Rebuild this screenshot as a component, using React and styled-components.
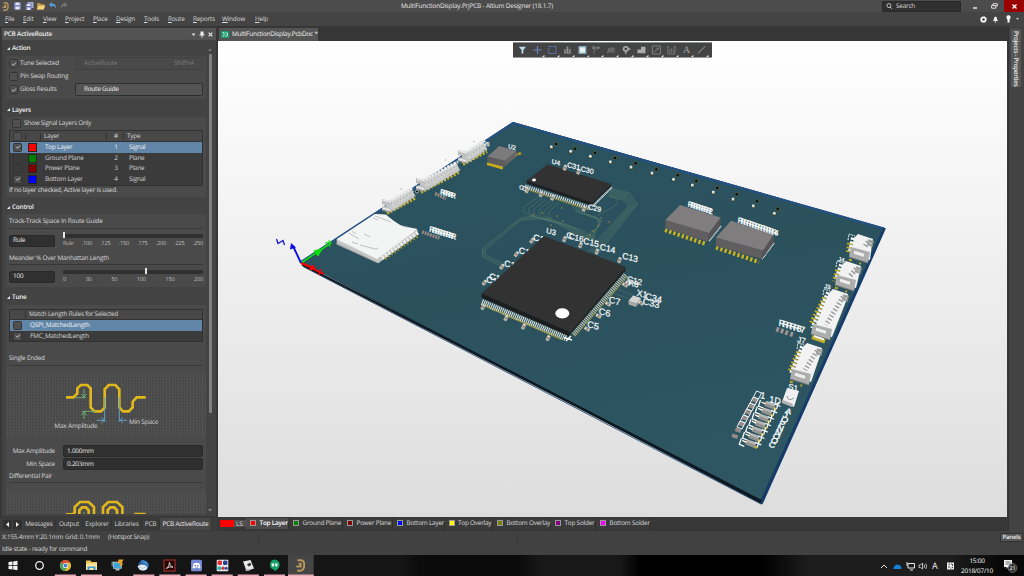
import React from "react";
import styled, { createGlobalStyle } from "styled-components";

const Global = createGlobalStyle`
  * { box-sizing: border-box; }
  html, body { margin: 0; padding: 0; background: #393939; overflow: hidden; }
  body {
    font-family: "Open Sans", "Noto Sans", sans-serif; font-size: 6.4px; line-height: 8px; letter-spacing: -0.21px; color: #dadada;
    text-rendering: geometricPrecision;
  }
`;

const Window = styled.div`
  width: 1024px; height: 576px; display: flex; flex-direction: column; overflow: hidden; white-space: nowrap;
`;
const Text = styled.span`
  display: block;
  padding-bottom: 1px;
  width: ${(p) => (p.$w ? p.$w + "px" : "auto")};
  flex: none;
  letter-spacing: ${(p) => -0.21 + (p.$ls || 0)}px;
  color: ${(p) => p.$color || "inherit"};
  font-weight: ${(p) => p.$weight || 400};
  text-align: ${(p) => p.$align || "left"};
  padding-left: ${(p) => p.$pl || 0}px;
`;

/* ---------- title and menu ---------- */
const TitleBar = styled.header`
  height: 12px; flex: none; background: #4c4c4c; display: grid; grid-template-columns: 401px 1fr 142px; align-items: center;
`;
const QuickTools = styled.div`display: flex; align-items: center; padding-left: 1px; height: 12px;`;
const TitleRight = styled.div`display: flex; align-items: center; height: 12px;`;
const SearchBox = styled.div`
  width: 79px; height: 11px; background: #303030; border: 1px solid #292929; border-radius: 1px;
  display: flex; align-items: center; gap: 4px; padding-left: 3px;
`;
const WindowButton = styled.div`
  width: ${(p) => p.$w}px; height: 12px; background: ${(p) => (p.$close ? "#9b0000" : "none")};
  display: flex; align-items: center; justify-content: center; margin-left: ${(p) => p.$ml || 0}px;
`;
const MenuBar = styled.nav`
  height: 14px; flex: none; background: #444; display: flex; align-items: center; padding-left: 5px;
`;
const MenuItem = styled.span`
  display: block; width: ${(p) => p.$w}px; flex: none; padding-bottom: 1px;
  &::first-letter { text-decoration: underline; }
`;
const MenuRight = styled.div`margin-left: auto; display: flex; align-items: center; gap: 5px; padding-right: 4px;`;

/* ---------- main area ---------- */
const Main = styled.div`height: 505px; flex: none; display: flex; background: #373737;`;
const Panel = styled.aside`width: 218px; flex: none; display: flex; flex-direction: column; padding: 2px 2px 0 2px; background: #373737;`;
const PanelHeader = styled.div`
  height: 12px; background: #535353; display: flex; align-items: center; padding: 0 3px 0 2px; color: #f0f0f0; flex: none;
`;
const HeaderIcons = styled.div`margin-left: auto; display: flex; gap: 3px; align-items: center;`;
const PanelBody = styled.div`height: 476px; flex: none; background: #434343; display: flex; overflow: hidden;`;
const Sections = styled.div`width: 204px; padding-left: 4px; flex: none; height: 474px; overflow: hidden;`;
const ScrollTrack = styled.div`
  width: 10px; height: 474px; display: flex; flex-direction: column; align-items: center; padding: 8px 2px 2px 0;
`;
const ScrollThumb = styled.div`width: 3px; height: 359px; background: #808080; border-radius: 1px; margin: 3px 0 auto;`;
const Heading = styled.h3`
  margin: 0; height: ${(p) => p.$h}px; font-size: 6.4px; font-weight: 600; color: #f2f2f2; display: flex; align-items: center; gap: 2px;
  padding-left: 1px; padding-top: ${(p) => p.$pt || 0}px;
`;
const Card = styled.section`
  height: ${(p) => p.$h}px; background: #4a4a4a; padding: ${(p) => p.$p || "0 3px"}; overflow: hidden;
`;
const Row = styled.div`display: flex; align-items: center; height: ${(p) => p.$h}px; padding-left: ${(p) => p.$pl || 0}px;`;
const CheckFrame = styled.span`
  width: 9px; height: 9px; flex: none; border-radius: 1.5px; margin-right: ${(p) => p.$mr ?? 2}px;
  background: ${(p) => (p.$faint ? "#3c3c3c" : "#505050")}; border: 1px solid ${(p) => (p.$faint ? "#353535" : "#353535")};
  display: flex; align-items: center; justify-content: center;
`;
const ActionButton = styled.div`
  width: 128px; height: 13px; border-radius: 1.5px; margin-left: auto; display: flex; align-items: center; justify-content: space-between;
  padding: 0 8px; background: ${(p) => (p.$off ? "#494949" : "#545454")}; border: 1px solid ${(p) => (p.$off ? "#404040" : "#303030")};
  color: ${(p) => (p.$off ? "#7c7c7c" : "#f2f2f2")};
`;
const Table = styled.div`width: 194px; border: 1px solid #313131; background: #3c3c3c; border-radius: 1px; overflow: hidden;`;
const TableRow = styled.div`
  height: ${(p) => p.$h || 10.7}px; display: flex; align-items: center; padding-left: 3px;
  background: ${(p) => (p.$head ? "#484848" : p.$on ? "#6085a6" : "#3b3b3b")};
  border-bottom: ${(p) => (p.$head ? "1px solid #333" : "none")};
  color: ${(p) => (p.$on ? "#f4f4f4" : "#d6d6d6")};
`;
const Swatch = styled.span`width: 9px; height: 9px; background: ${(p) => p.$c}; border: 1px solid #262626; margin: 0 8px 0 6px; flex: none;`;
const ColRule = styled.i`width: 1px; height: 7px; background: #333; flex: none; margin: 0 ${(p) => p.$mr || 0}px 0 ${(p) => p.$ml || 0}px;`;
const Rule = styled.div`height: 1px; background: #383838; margin-top: ${(p) => p.$mt || 0}px;`;
const Field = styled.div`
  width: ${(p) => p.$w}px; height: 12px; background: #303030; border: 1px solid #292929; border-radius: 2px;
  display: flex; align-items: center; padding-left: 3px; color: #eee; flex: none; margin-left: ${(p) => p.$ml || 0}px;
`;
const Slider = styled.div`width: 140px; margin-left: 8px; height: 16px; padding-top: 1px;`;
const Track = styled.div`height: 4px; background: #303030; border-radius: 1px; display: flex; align-items: center; padding-left: ${(p) => p.$at}px;`;
const Thumb = styled.i`width: 2px; height: 6px; background: #e6e6e6; margin-top: -1px; flex: none;`;
const Ticks = styled.div`display: flex; justify-content: space-between; font-size: 5.6px; line-height: 7px; margin-top: 2px; color: #bdbdbd;`;
const Figure = styled.div`
  width: 200px; height: ${(p) => p.$h}px; margin-left: -3px; overflow: hidden;
  background: #4b4b4b repeating-conic-gradient(#515151 0 25%, #484848 0 50%) 0 0 / 3px 3px;
  svg { display: block; }
`;
const PanelTabs = styled.div`height: 14px; display: flex; align-items: center; flex: none; background: #3b3b3b; margin: 1px -2px 0; overflow: hidden; padding-left: 3px;`;
const Arrow = styled.span`width: 10px; height: 9px; background: #303030; display: flex; align-items: center; justify-content: center; border-right: 1px solid #444;`;
const PanelTab = styled.span`
  width: ${(p) => p.$w}px; height: 12px; flex: none; line-height: 11px; text-align: center;
  background: ${(p) => (p.$on ? "#484848" : "#3b3b3b")}; border-right: 1px solid #333; color: ${(p) => (p.$on ? "#f0f0f0" : "#d6d6d6")};
`;

const Workspace = styled.div`width: 790px; flex: none; display: flex; flex-direction: column;`;
const DocTabs = styled.div`height: 15px; padding-top: 2px; background: #363636; flex: none;`;
const DocTab = styled.div`width: 99px; height: 13px; margin-left: 1px; background: #555; display: flex; align-items: center; padding-left: 2px; gap: 3px; color: #f2f2f2;`;
const Canvas = styled.div`
  position: relative; width: 789px; height: 476px; background: linear-gradient(#fff, #ddd); flex: none;
  > svg { display: block; }
`;
const FloatBar = styled.div`
  position: absolute; left: 295px; top: 1px; width: 199px; height: 16px; background: #444; border-top: 1px solid #8b918f; border-bottom: 1px solid #999;
  display: flex; align-items: center; padding-left: 2px;
`;
const ToolCell = styled.span`width: 14.9px; height: 14px; display: flex; align-items: center; justify-content: center; flex: none;`;
const LayerTabs = styled.div`height: 12px; display: flex; align-items: center; background: #383838; padding-left: 2px;`;
const LayerTab = styled.span`
  display: flex; align-items: center; height: 11px; width: ${(p) => p.$w}px; flex: none; padding-left: 4px; gap: 3.5px;
  border-right: 1px solid #2f2f2f; background: ${(p) => (p.$on ? "#4c4c4c" : "#3b3b3b")}; color: ${(p) => (p.$on ? "#fff" : "#dcdcdc")};
  font-weight: ${(p) => (p.$on ? 600 : 400)};
`;
const LayerColor = styled.i`width: 6px; height: 6px; border: 1px solid #999; background: ${(p) => p.$c}; flex: none;`;
const CurrentLayer = styled.span`display: flex; width: 26px; height: 7px; background: #505050; line-height: 7px; flex: none; &::before { content: ""; width: 14px; background: #f00; margin-right: 2px; }`;
const SideBar = styled.div`width: 16px; background: #434343; padding: 3px 0 0 2px; border-left: 1px solid #333;`;
const SideTab = styled.div`
  width: 10px; height: 58px; background: #565656; writing-mode: vertical-rl; line-height: 10px; padding-top: 2px; font-weight: 600; letter-spacing: -0.33px; color: #e6e6e6;
`;

/* ---------- footer ---------- */
const Status = styled.footer`height: 24px; flex: none; background: #414141; display: grid; grid-template-rows: 13px 11px;`;
const StatusRow = styled.div`display: flex; align-items: center; padding: 0 1px 0 2px;`;
const PanelsButton = styled.div`margin-left: auto; width: 23px; height: 9px; background: #555; border: 1px solid #333; line-height: 6px; text-align: center; color: #eee; font-weight: 600; font-size: 6px;`;
const Divider = styled.i`width: 1px; height: 8px; background: #353535; margin-left: ${(p) => p.$ml}px;`;
const TaskBar = styled.div`
  height: 21px; flex: none; display: flex; color: #fff;
  background: linear-gradient(90deg, #151515 0 400px, #0b0b0b 420px 520px, #181818 540px 620px, #000 640px 760px, #1d1d1d 810px 950px, #080808 1000px);
`;
const TaskButton = styled.div`
  width: 26.15px; height: 21px; display: flex; align-items: center; justify-content: center; flex: none;
  background: ${(p) => (p.$on ? "#454545" : "none")};
  box-shadow: ${(p) => (p.$run ? "inset 0 -1.5px #e9a9b5" : "none")};
  clip-path: inset(0 ${(p) => (p.$on ? 0 : 2.5)}px);
`;
const Tray = styled.div`margin-left: auto; display: flex; align-items: center; padding-right: 6px;`;
const Clock = styled.div`width: 46px; text-align: center; line-height: 9.5px; margin: 0 3px 0 -1px;`;

/* ---------- small drawings ---------- */
const Check = ({ on, faint, mr }) => (
  <CheckFrame $faint={faint} $mr={mr}>
    {on && <svg width="6" height="6" viewBox="0 0 6 6"><path d="M1 2.8 2.5 4.3 5 1.5" fill="none" stroke="#c8c8c8" strokeWidth="1" /></svg>}
  </CheckFrame>
);
const Tri = () => <svg width="3" height="3" viewBox="0 0 3 3"><path d="M3 0V3H0Z" fill="#eee" /></svg>;
const AltiumMark = ({ s = 9 }) => (
  <svg width={s} height={s} viewBox="0 0 9 9">
    <path d="M2.4.8H4.6A2.4 2.4 0 0 1 7 3.4V5A3 3 0 0 1 4.2 8.200H2.200M2.300 5.800V5.200H4.600V3.200H3.200" fill="none" stroke="#b9995a" strokeWidth="1.35" />
  </svg>
);

const toolIcons = [
  <path key="0" d="M1 1.5H9L6 5V9H4V5Z" fill="#b9dcec" />,
  <path key="1" d="M5 .5V9.5M.5 5H9.5" stroke="#6884c0" strokeWidth="1.2" fill="none" />,
  <rect key="2" x="1" y="1" width="8" height="8" fill="none" stroke="#6a8ad6" strokeDasharray="1.5 .7" />,
  <path key="3" d="M1.500 8.500V4H3V8.500ZM4 8.500V1H6V8.500ZM7 8.500V4H8.500V8.500ZM1 8H9V9H1Z" fill="#959595" />,
  <g key="4"><rect x=".5" y=".5" width="9" height="9" fill="#7fa8b8" /><rect x="2" y="2" width="6" height="6" fill="#e9eef0" /></g>,
  <g key="5" fill="none" stroke="#8a8a8a"><path d="M2 9V6L7 2.500" strokeDasharray="2 .7" /><rect x="1" y="1.500" width="2" height="2" /><path d="M4 2.500H9M7.500 4V1" /></g>,
  <path key="6" d="M.5 8.500 2 3V8L4 2V8L6 2V8L8 3V8" fill="none" stroke="#6f6f6f" />,
  <g key="7"><circle cx="4.300" cy="3.800" r="2.500" fill="none" stroke="#b4b4b4" strokeWidth="1.700" /><path d="M4.300 6V9.500M6.500 4H9.500" stroke="#b4b4b4" strokeWidth="1.300" /></g>,
  <path key="8" d="M.5 8.500V4.500H4.500V1.500H9.500V8.500Z" fill="#aaa" />,
  <path key="9" d="M.5.5H9.500V9.500H.5ZM2.500 7.500 7 3M5 3H7V5" fill="none" stroke="#858585" />,
  <path key="10" d="M1 1V9.500H9V1M3 8V4M5 8V3M7 8V4M0 1.500H2.500M7.500 1.500H10" fill="none" stroke="#7a7a7a" />,
  <text key="11" x="5" y="8.800" textAnchor="middle" fontFamily="Liberation Serif" fontSize="11" fill="#a0a0a0">A</text>,
  <path key="12" d="M1 9 9 1" stroke="#858585" strokeWidth="1.200" />,
];

const Meander = () => (
  <svg width="200" height="65" viewBox="18 69 600 195">
    <path d="M198 142H220L232 130V115L243 105H262L272 115V172L283 184H303L314 173V118L326 105H346L358 118V172L369 184H386L398 172V155L410 142H437" fill="none" stroke="#e0b81c" strokeWidth="8" />
    <g fill="none" stroke="#6faa72" strokeWidth="3"><path d="M225 143H258M252 117V140M244 132 252 141 260 132M246 184H288M252 207V187M244 196 252 186 260 196" /></g>
    <g fill="none" stroke="#5fa0c4" strokeWidth="3"><path d="M314 142V216M358 142V216M290 211H312M304 203 313 211 304 219M381 211H360M369 203 360 211 369 219" /></g>
    <g fill="#d4d4d4" fontSize="19.5" fontFamily="Open Sans" letterSpacing="0">
      <text x="163" y="234" textLength="130">Max Amplitude</text><text x="387" y="221" textLength="88">Min Space</text>
    </g>
  </svg>
);
const PairMeander = () => (
  <svg width="200" height="24" viewBox="18 422 600 72">
    <g fill="none" stroke="#e0b81c" strokeWidth="8">
      <path d="M198 492H218L224 486V470L240 455H266L282 470V500M238 500V480L246 471H258L266 480V500" />
      <path d="M309 500V470L325 455H351L367 470V500M323 500V480L331 471H343L351 480V500M403 491H437" />
    </g>
    <path d="M252 486V500" stroke="#6faa72" strokeWidth="3" />
  </svg>
);

/* ---------- board drawing ---------- */
const poly = (pts) => pts.map((p) => p.join(",")).join(" ");
const Silk = ({ x, y, s = 8, children, m = "1 .26 -.12 1.02", w = 0.22 }) => (
  <text transform={`matrix(${m} ${x} ${y})`} fontSize={s} fill="#f4f8f8" stroke="#f4f8f8" strokeWidth={w} letterSpacing="0" fontFamily="Liberation Sans">{children}</text>
);
const Block = ({ a, b, c, d, h, top, front, side }) => (
  <g>
    <polygon points={poly([a, d, [d[0] - 1, d[1] + h], [a[0], a[1] + h]])} fill={front} />
    <polygon points={poly([d, c, [c[0] - 0.5, c[1] + h], [d[0] - 1, d[1] + h]])} fill={side} />
    <polygon points={poly([a, b, c, d])} fill={top} />
  </g>
);
const Pins = ({ p, q, w = 3, dash = "1 1", c = "#d9dcd6" }) => (
  <line x1={p[0]} y1={p[1]} x2={q[0]} y2={q[1]} stroke={c} strokeWidth={w} strokeDasharray={dash} />
);
const Cap = ({ x, y, r = 0 }) => (
  <g transform={`translate(${x} ${y}) rotate(${r})`}>
    <rect x="-1.7" y="-2.8" width="3.6" height="5.8" rx="1" fill="#b9b6ab" /><rect x="-1.5" y="-1" width="3" height="2" fill="#958c82" /><rect x="-1" y="-2.4" width="1.6" height="1.3" fill="#ebe9e2" />
  </g>
);
const holes = [
  [551.3, 146.7, 556, 144], [570.7, 151.3, 575, 148.7], [590.3, 156.3, 595, 153], [610.3, 161.7, 615, 158], [631, 167, 635.7, 163.3],
  [652, 173, 656.3, 169.3], [673.5, 179.2, 677.7, 175.3], [692.3, 185, 696.3, 181], [713.3, 192, 717.3, 188], [733, 199, 736.7, 194.3],
  [753.3, 205.7, 757, 201.3], [774.3, 213.3, 777.7, 209],
];
const EdgeConnector = ({ x, y, len, dx = 0, pins = 4 }) => (
  <g>
    <line x1={x - 4} y1={y + 5} x2={x - 6 + dx} y2={y + len * 0.72} stroke="#c2ad28" strokeWidth="6" strokeDasharray="1.8 2" />
    <polygon points={poly([[x, y], [x + 4, y - 4], [x + 19, y + 1], [x + 18, y + 6], [x + 15 + dx, y + len], [x - 4 + dx, y + len - 5]])} fill="#f1f2f1" />
    <line x1={x + 1} y1={y} x2={x - 3 + dx} y2={y + len - 8} stroke="#f1f2f1" strokeWidth="8" strokeDasharray="2.4 1.4" />
    <line x1={x + 14} y1={y + 4} x2={x + 9 + dx} y2={y + len - 12} stroke="#9a9b9b" strokeWidth="5" strokeDasharray="1.4 2.2" />
    <line x1={x + 17} y1={y + 2} x2={x + 15.5} y2={y + 8} stroke="#a0a1a1" strokeWidth="6" strokeDasharray="3 .7" />
    <g transform={`translate(${x - 5 + dx} ${y + len - 13})`}>
      <polygon points="1,0 20,5 18,16 -1,10" fill="#adaeae" /><polygon points="4,3 15,6.500 14,10.500 3,7" fill="#ececec" stroke="#919292" strokeWidth=".6" />
      <path d="M-1 10 18 16" stroke="#777" />
      {pins > 6 ? <path d="M0 13 13 17.500" stroke="#c2ad28" strokeWidth="4" /> : <path d="M-1 12.500 11 16.700" stroke="#c2ad28" strokeWidth="2" strokeDasharray="3 8" />}
      {pins > 6 && <path d="M2 12 12 15.500" stroke="#f1f2f1" strokeWidth="2" />}
    </g>
    <path d={`M${x - 6} ${y + 2}L${x - 5} ${y - 4}L${x + 1} ${y - 2}`} fill="none" stroke="#e9efee" strokeWidth="1" strokeDasharray="2 .8" />
  </g>
);
const LeftConnector = ({ x, y, len }) => (
  <g transform={`translate(${x} ${y})`}>
    <line x1="5" y1="13.500" x2={len + 4} y2={13.5 - len * 0.52} stroke="#c2ad28" strokeWidth="3" strokeDasharray="2.2 1.5" />
    <polygon points={poly([[8, 1], [len, -len * 0.42], [len + 4, -len * 0.42 + 8], [10, 11], [4, 12]])} fill="#cfd0d0" />
    <line x1="9" y1="0" x2={len + 2} y2={-len * 0.43} stroke="#ececec" strokeWidth="3" strokeDasharray="2.6 1" />
    <line x1="12" y1="4" x2={len + 3} y2={4 - len * 0.46} stroke="#b4b5b5" strokeWidth="1.500" strokeDasharray="1.500 2.200" />
    <line x1="11" y1="9.500" x2={len + 4} y2={9.5 - len * 0.5} stroke="#c3c4c4" strokeWidth="3.500" strokeDasharray="2 1.2" />
    <polygon points="0,-1 10,1 10,5 7,6 11,8 9,12 0,10 0,7 4,6 4,4 0,3" fill="#bfc0c0" />
    <path d="M1 0 9 2M1 8 8 10" stroke="#e8e8e8" strokeWidth="1.4" /><path d="M0 3.500 4 4.500M0 10.500 9 12.500" stroke="#8e9090" strokeWidth=".7" />
  </g>
);
const range = (n) => Array.from({ length: n }, (_, i) => i);

const Board = () => (
  <svg width="789" height="476" viewBox="218 41 789 476">
    <defs>
      <linearGradient id="pcb" x1="0" y1="0" x2=".3" y2="1"><stop offset="0" stopColor="#2a5360" /><stop offset=".5" stopColor="#2b515d" /><stop offset="1" stopColor="#2d5562" /></linearGradient>
    </defs>
    <polygon points="301,262 513,122 884.5,228 762,504.5" fill="#0d1a26" />
    <polygon points="301,262 513,122 884.5,228 761,500" fill="url(#pcb)" />
    <path d="M301 262 513 123.2 884 228.6" fill="none" stroke="#245182" strokeWidth="2.2" />
    <path d="M884.5 228 761.5 503" fill="none" stroke="#163c6b" strokeWidth="3" />
    <path d="M303 266.5 761 504" stroke="#345778" strokeWidth="1" fill="none" />
    <path d="M302 264.5 761 501" stroke="#0d1821" strokeWidth="2.2" fill="none" />

    {/* routed traces */}
    <g fill="none" stroke="#587c6b" strokeWidth=".65" opacity=".8">
      {range(3).map((i) => <path key={i} d={`M552 ${222 - i * 2}L532 ${216 + i * 1.6} 520 ${218 + i * 1.3} ${482.5 + i * 1.4} ${248 + i} ${482.5 + i * 1.4} ${257 - i} 503 ${267 - i * 2}`} />)}
      {range(7).map((i) => <path key={i} d={`M609 ${188 + i * 1.4}L${630 - i} ${193 + i * 1.2} ${637.5 - i * 1.5} ${204 + i * 0.4} ${606 - i * 1.4} ${244 - i * 0.7} ${600 - i * 2} 252`} />)}
      {range(6).map((i) => <path key={"a" + i} d={`M${538 + i * 4} ${197 + i * 1.3}L${524 + i * 5} ${207 + i} ${524 + i * 5} ${212 + i} ${531 + i * 5} ${216 + i} ${554 + i * 6} ${222 + i * 1.8} ${586 + i * 2} 239`} />)}
      {range(5).map((i) => <path key={"b" + i} d={`M${572 + i * 2} ${205 + i * 0.5}L${575 + i * 3} ${211 + i} ${596 + i * 1.5} ${217 + i} ${600 - i} ${225 + i} ${585 + i * 2} ${237 + i}`} />)}
      <path d="M607 195 618 199 616 205 597 216M602 290 634 300M606 285 640 298" />
    </g>
    <g fill="#a58a3c">{[[542, 213], [557, 216], [562, 208], [601, 218], [609, 222], [598, 226], [593, 231], [551, 225], [590, 235], [563, 221], [533, 215]].map((p, i) => <circle key={i} cx={p[0]} cy={p[1]} r=".8" />)}</g>

    {/* test points */}
    {holes.map((h, i) => (
      <g key={i}><circle cx={h[2]} cy={h[3]} r="1.7" fill="#050b0c" stroke="#6b6b3a" strokeWidth=".6" /><ellipse cx={h[0]} cy={h[1] + 0.6} rx="2.2" ry="1.9" fill="#1f3337" /><circle cx={h[0]} cy={h[1]} r="1.5" fill="#e2e6e3" /><path d={`M${h[0] - 1.5} ${h[1] + 1.4}h3`} stroke="#aa9b52" strokeWidth=".7" /></g>
    ))}

    {/* card socket and left-hand connectors */}
    <polygon points="336.7,239.3 375,214 386,214.7 390,219 400,225 417,229 418.5,234 378.3,263.3 336.7,244.5" fill="#c5c6c6" />
    <polygon points="336.7,239.3 375,214 386,214.7 394,221 403,227 417,229 411,234 377,259" fill="#f3f4f4" />
    <path d="M336.7 243.5 377 262.5" stroke="#9c9e9e" strokeWidth="1" />
    <Pins p={[382, 258]} q={[418, 232.5]} w={4} dash="2.2 1.6" c="#ececec" />
    <Pins p={[385, 259]} q={[418, 236]} w={2.2} dash="1.6 2.2" c="#ab9b31" />
    <path d="M349 233 359 239M352 231.5 356 233.5M375 216 391 222M373 218 378 220M360 245 375 249 378 248M364 234 370 237M352 242 358 244" stroke="#a9aaaa" strokeWidth=".7" fill="none" />
    <LeftConnector x={382} y={200} len={29} />
    <LeftConnector x={416} y={179} len={40} />
    <LeftConnector x={458} y={151} len={25} />
    <g fill="#a8aaab"><circle cx="401" cy="189" r=".7" /><circle cx="445.5" cy="160" r=".7" /><circle cx="474" cy="141.5" r=".7" /></g>
    <circle cx="417" cy="191.5" r="1.5" fill="#0d1517" stroke="#ddd" strokeWidth=".7" />
    <Silk x={484} y={145} s={5}>J5</Silk>
    <Pins p={[435, 193.5]} q={[446, 198.5]} w={3.6} dash="2 .8" c="#928783" />
    <Pins p={[422, 232]} q={[439.5, 238]} w={3.6} dash="2 .8" c="#928783" />
    {range(5).map((i) => <Silk key={i} x={440 + i * 2.6} y={194 + i * 0.8} s={7} w={0.4}>R</Silk>)}
    {range(9).map((i) => <Silk key={i} x={429 + i * 2.7} y={231.5 + i * 0.85} s={7.5} w={0.4}>R</Silk>)}

    {/* oscillator */}
    <path d="M487 163.5 503 168" stroke="#c9a91c" strokeWidth="3" /><path d="M515 155 522 153" stroke="#c9a91c" strokeWidth="2.5" strokeDasharray="2.5 1" />
    <Block a={[487.3, 156.5]} b={[499.3, 146]} c={[516.7, 151]} d={[505, 160.7]} h={6} top="#7c7a7b" front="#5d5b5c" side="#676566" />
    <Silk x={508} y={148} s={6}>U2</Silk>

    {/* U4 memory */}
    <Pins p={[525, 186.5]} q={[590, 208]} w={4} dash="1.2 1" c="#d9dfd9" />
    <Pins p={[526, 189]} q={[589, 210]} w={1.5} dash="1.2 1" c="#b2a02d" />
    <Pins p={[593, 206]} q={[612, 187]} w={2} dash="1 .5" c="#dfe4e2" />
    <Block a={[526.7, 180.5]} b={[547.7, 164.3]} c={[611.3, 184]} d={[592, 202.3]} h={3} top="#323233" front="#1f1f20" side="#252526" />
    <ellipse cx="534" cy="180" rx="2" ry="1.4" fill="#fff" />
    <Cap x={565} y={167.5} r={20} /><Cap x={578.5} y={171.5} r={20} /><Cap x={527} y={190} r={20} /><Cap x={541} y={194} r={20} /><Cap x={552.5} y={197.5} r={20} /><Cap x={584} y={208.5} r={20} />
    <Silk x={551.5} y={163.5} s={6.5}>U4</Silk><Silk x={567} y={167} s={7}>C31</Silk><Silk x={580.5} y={171} s={7}>C30</Silk>
    <Silk x={588} y={209} s={7}>C29</Silk><Silk x={519} y={189} s={6}>C</Silk><Silk x={522} y={190} s={6}>C</Silk>

    {/* U3 processor */}
    <Cap x={532} y={240.5} r={40} /><Cap x={516.5} y={254} r={40} /><Cap x={502} y={266.5} r={40} /><Cap x={484.5} y={282.5} r={40} />
    <Cap x={564.5} y={239} r={20} /><Cap x={580.5} y={245} r={20} /><Cap x={597} y={251.5} r={20} /><Cap x={619.5} y={260} r={20} />
    {[[533, 240], [518.5, 253], [504, 266], [489, 279], [486, 282]].map((p, i) => <Silk key={i} x={p[0]} y={p[1]} s={8.5}>C1</Silk>)}
    <Pins p={[482, 302]} q={[566, 338]} w={6} dash="1.1 .9" c="#dbe0da" />
    <Pins p={[482, 304.5]} q={[562, 339.5]} w={2} dash="1.1 .9" c="#a99c35" />
    <Pins p={[573, 334]} q={[626, 274]} w={6} dash="1.1 .9" c="#c6cbbc" />
    <Pins p={[575, 336]} q={[628, 276]} w={1.5} dash="1.1 .9" c="#a99c35" />
    <Block a={[481.7, 293.3]} b={[544, 236]} c={[625.7, 266.7]} d={[570, 331.7]} h={4.5} top="#323233" front="#1d1e1e" side="#242525" />
    <ellipse cx="562.3" cy="313.3" rx="7" ry="5.1" fill="#fff" />
    <Cap x={483} y={307} r={25} /><Cap x={506} y={318} r={25} /><Cap x={523.5} y={326.5} r={25} /><Cap x={548} y={338} r={25} />
    <path d="M564 337.5 572 340M566 341 571 336" stroke="#fff" strokeWidth="1.4" />
    <Silk x={546} y={233} s={7.5}>U3</Silk><Silk x={566} y={237.5}>C</Silk><Silk x={568.5} y={238.5}>C16</Silk><Silk x={583} y={243.5} s={8.5}>C15</Silk><Silk x={599.5} y={249.5} s={8.5}>C14</Silk><Silk x={622} y={258.5} s={8.5}>C13</Silk>
    <Cap x={608} y={304} r={-60} /><Cap x={598.5} y={316} r={-60} /><Cap x={587} y={329} r={-60} /><Cap x={625} y={285} r={-60} /><Cap x={628} y={283} r={-60} />
    <Silk x={608.5} y={302.5} s={9}>C7</Silk><Silk x={598.5} y={314} s={9}>C6</Silk><Silk x={587} y={327} s={9}>C5</Silk>
    <Silk x={627} y={281.5}>C12</Silk><Silk x={628} y={285} s={8}>R8</Silk>
    <Block a={[628.5, 301]} b={[633, 295.5]} c={[641, 298]} d={[637, 303.5]} h={3.5} top="#d5d6d4" front="#aaa8a2" side="#9b9891" />
    <Cap x={641} y={303} r={-50} />
    <Silk x={636.5} y={295.5} s={8.5}>X1</Silk><Silk x={645} y={299} s={9}>C34</Silk><Silk x={642.5} y={304} s={9}>C33</Silk>

    {/* grey packages */}
    <Pins p={[665, 230]} q={[705, 243.7]} w={4.2} dash="2.4 2" c="#c9b21f" />
    <Pins p={[709, 241]} q={[721, 226]} w={1.8} dash="1 .5" c="#dfe4e2" />
    <Block a={[665.3, 220]} b={[680, 205]} c={[720.7, 217.5]} d={[709, 233]} h={8.5} top="#7f7d7e" front="#605e5f" side="#555354" />
    <Pins p={[716, 247.5]} q={[759, 262]} w={4.2} dash="2.4 2.1" c="#c9b21f" />
    <Pins p={[762, 259]} q={[774, 243]} w={1.8} dash="1 .5" c="#dfe4e2" />
    <Block a={[716, 237.5]} b={[731, 220.7]} c={[774, 234]} d={[763, 250.5]} h={8.5} top="#7f7d7e" front="#605e5f" side="#555354" />
    {range(9).map((i) => <Silk key={i} x={687.5 + i * 2.6} y={206.5 + i * 0.85} s={7.5} w={0.35}>{i === 8 ? "2" : "R"}</Silk>)}
    {range(14).map((i) => <Silk key={i} x={737.5 + i * 2.8} y={222.5 + i * 0.95} s={7.5} w={0.35}>{i === 13 ? "4" : "R"}</Silk>)}

    {/* right-hand connectors */}
    <EdgeConnector x={854} y={238} len={22} dx={1} />
    <EdgeConnector x={842} y={265} len={23} dx={-1} />
    <EdgeConnector x={829} y={293} len={44} dx={-12} pins={9} />
    <EdgeConnector x={803} y={347} len={35} dx={-7} />
    <Silk x={838} y={261} s={6}>J4</Silk><Silk x={824} y={288} s={6}>J3</Silk><Silk x={797} y={342} s={8}>J7</Silk><Silk x={788} y={389} s={8}>S1</Silk>
    {[[777.5, 329.5], [782, 331], [786.5, 332.7], [791.5, 334.3]].map((p, i) => <rect key={i} x={p[0] - 1.3} y={p[1] - 2.4} width="2.8" height="4.8" fill="#a09490" transform={`rotate(20 ${p[0]} ${p[1]})`} />)}
    {["R", "R", "R", "R", "R", "8", "7"].map((t, i) => <Silk key={i} x={778.5 + i * 3.6} y={325.5 + i * 1.1} s={8.5} w={0.35}>{t}</Silk>)}
    <polygon points="787,388 799,391 794,407 782,402" fill="#f0f1f0" /><path d="M783 400 793 404 792 407 782 403Z" fill="#b1b3b2" /><path d="M787 396Q788 402 794 398" fill="none" stroke="#777" strokeWidth=".8" />

    {/* resistor and LED columns */}
    {range(7).map((i) => (
      <g key={i} transform={`translate(${754.5 - i * 3.3} ${400 + i * 6})`}>
        <rect x="-2.8" y="-1.6" width="6" height="3.6" fill="#978b87" transform="rotate(20)" />
        {i < 6 && <path d="M-1-3 2-9 7-7 4-1Z" fill="none" stroke="#eff4f3" strokeWidth="1" />}
      </g>
    ))}
    {range(7).map((i) => (
      <g key={i} transform={`translate(${770.5 - i * 3.2} ${405 + i * 6.4})`}>
        <path d="M-6-2-3-1M3 3 6 4.500" stroke="#c9b21f" strokeWidth="2.600" /><polygon points="-4,-4 5,-1 3,4.500 -6,1" fill="#919292" /><polygon points="-4,-4 5,-1 4,1.500 -5,-2" fill="#b6b7b6" />
        <path d="M-10-5-12 1-7 3M-9-3-5-1" fill="none" stroke="#fff" strokeWidth="1.300" />
        <path d="M8-3 6 4M4-1 10 1.500" stroke="#fff" strokeWidth="1.200" />
      </g>
    ))}
    <Silk x={760} y={398} s={9}>1</Silk><Silk x={769} y={402} s={9}>1D</Silk>
    {["C", "O", "O", "N", "N", "P", "O", "J", "A"].map((t, i) => <Silk key={i} x={768 + i * 2.05} y={446.5 - i * 4.2} s={9} w={0.4} m="1 .25 -.3 .8">{t}</Silk>)}

    {/* axes */}
    <path d="M301 263 331 243" stroke="#0ce00c" strokeWidth="1.6" /><path d="M322 249 314 251 318 256ZM332 242 325 243M329 240 330 247" fill="#0ce00c" stroke="#0ce00c" strokeWidth="1" />
    <path d="M301 263 293.5 247" stroke="#0909e8" strokeWidth="1.8" /><path d="M291 243 296 247.5 290 249.5Z" fill="#0909e8" />
    <path d="M301 263 313 268" stroke="#f00" strokeWidth="2" /><path d="M317 270 309 270 312.5 264.5Z" fill="#f00" /><path d="M315 270 324 274M319 275 321 269" stroke="#f00" strokeWidth="1.4" />
    <path d="M276.500 239 278 243.500 283 240.500 284.500 245" fill="none" stroke="#1515d8" strokeWidth="1.300" />
  </svg>
);

/* ---------- taskbar icons ---------- */
const tasks = [
  [<path key="a" d="M0 1.5 4 1V4.8H0ZM4.7.9 9 .3V4.8H4.7ZM0 5.4H4V9L0 8.5ZM4.7 5.4H9V9.7L4.7 9.1Z" fill="#f2f2f2" />, 0],
  [<circle key="a" cx="5" cy="5" r="3.8" fill="none" stroke="#eee" strokeWidth="1.3" />, 0],
  [<g key="a"><circle cx="5" cy="5" r="5.6" fill="#e2b92d" /><path d="M5-.6A5.6 5.6 0 0 1 9.8 2.2H5L2.7 6.2.2 2A5.6 5.6 0 0 1 5-.6" fill="#d94b3c" /><path d="M.2 2A5.6 5.6 0 0 0 4.3 10.5L6.6 6.8Z" fill="#4aa35b" /><circle cx="5" cy="5" r="2.6" fill="#fff" /><circle cx="5" cy="5" r="2" fill="#4a80d9" /></g>, 1],
  [<g key="a"><path d="M-.5 0H4L5 1.5H10.5V9.5H-.5Z" fill="#e8c35c" /><path d="M-.5 3H10.5V9.5H-.5Z" fill="#fbe49b" /><path d="M1 9.5V6H9V9.5H7V7.5H3V9.5Z" fill="#3f9bd8" /></g>, 1],
  [<g key="a"><rect x="-1" y="1" width="6" height="5" fill="#6d7c86" /><rect x="1" y="2" width="8" height="6" fill="#39a5da" stroke="#c1d4df" strokeWidth=".6" /><rect x="3" y="8" width="4" height="2" fill="#a8b5bc" /><path d="M6-1 11-1 9 3 11 3 7 7 8 3 5 3Z" fill="#f0a32b" /></g>, 0],
  [<g key="a"><circle cx="5" cy="5" r="5.3" fill="#285e9e" /><path d="M-1 6Q3 2 9 6L8 9Q4 11 1 9Z" fill="#e9edf0" /><path d="M2 0Q8-1 10.5 5L6 4Z" fill="#3f87c8" /><path d="M0 6 4 8 8 6" fill="none" stroke="#9cb9d6" strokeWidth=".7" /></g>, 1],
  [<g key="a"><rect x="-.5" y="-.5" width="11" height="11" fill="#260404" stroke="#b2342e" /><path d="M1.8 8Q5 6 5 1.8 5 6 8.5 6.7 5 5.5 1.8 8" fill="none" stroke="#e4dcdc" strokeWidth=".9" /></g>, 1],
  [<g key="a"><rect x="-.5" y="-.8" width="11" height="11.5" rx="1.5" fill="#7388cf" /><path d="M2 3Q5 1.5 8 3L9 7.5 7 8 6.3 7H3.7L3 8 1 7.5Z" fill="#fff" /><circle cx="3.7" cy="5.2" r=".9" fill="#7388cf" /><circle cx="6.3" cy="5.2" r=".9" fill="#7388cf" /></g>, 1],
  [<g key="a"><rect x="-.8" y="-.8" width="11.6" height="11.6" rx="1" fill="#e7eaf2" /><rect x="0" y="0" width="4.5" height="4.5" rx="1.5" fill="#df2f2f" /><rect x="5.5" y="0" width="4.5" height="4.5" rx="1.5" fill="#26418f" /><circle cx="1.8" cy="7.8" r="2" fill="#2db3b6" /><circle cx="5.6" cy="7.8" r="1.8" fill="#d83931" /><circle cx="8.8" cy="7.8" r="1.6" fill="#3858b8" /></g>, 1],
  [<g key="a"><path d="M-.5 1 7-.5 10.500 8 3 10.500Z" fill="#e8e8e8" /><path d="M3.500 4 6.500 2 8 4.500 5 6Z" fill="#333" /><path d="M2 9.500H6" stroke="#aaa" strokeWidth="1.500" /></g>, 1],
  [<g key="a"><path d="M5-1A5.2 5.2 0 0 1 10.2 4.2Q10 8 5 11V9.3A5.2 5.2 0 0 1 5-1Z" fill="#16a068" /><path d="M2.2 3H4.6V5L3.5 6.5H2.8L3.3 5.2H2.2ZM5.6 3H8V5L6.9 6.5H6.2L6.7 5.2H5.6Z" fill="#fff" /></g>, 1],
];

const menus = [["File", 18], ["Edit", 20], ["View", 22], ["Project", 28], ["Place", 23], ["Design", 28], ["Tools", 24], ["Route", 25], ["Reports", 29], ["Window", 33], ["Help", 20]];
const layers = [["Top Layer", "1", "Signal", "#f00", true], ["Ground Plane", "2", "Plane", "#008000"], ["Power Plane", "3", "Plane", "#800000"], ["Bottom Layer", "4", "Signal", "#00f", true]];
const panelTabs = [["Messages", 33], ["Output", 27], ["Explorer", 29], ["Libraries", 30], ["PCB", 18], ["PCB ActiveRoute", 52, true]];
const layerTabs = [["Top Layer", 43, "#f00", true], ["Ground Plane", 54, "#008000"], ["Power Plane", 50, "#800000"], ["Bottom Layer", 51.5, "#00f"], ["Top Overlay", 48.5, "#ff0"], ["Bottom Overlay", 58, "#808000"], ["Top Solder", 45, "#800080"], ["Bottom Solder", 54, "#f0f"]];

export default function App() {
  return (
    <Window>
      <Global />
      <TitleBar>
        <QuickTools>
          <AltiumMark s={9} />
          <svg width="60" height="12" viewBox="0 0 60 12">
            <g transform="translate(4 2.500)"><path d="M0 0H7V7H0Z" fill="#7982b8" /><path d="M1.5 0H5.5V2.5H1.5ZM1.5 4H5.5V7H1.5Z" fill="#e4e5ee" /></g>
            <g transform="translate(15.500 2)"><path d="M2 0H8V6H2Z" fill="#a7abd0" /><path d="M0 1.5H6V8H0Z" fill="#6e78b5" /><path d="M1.5 2H5V4H1.5ZM1.5 5.5H5V8H1.5Z" fill="#dfe1ef" /></g>
            <path d="M27 3H30L31 4H34V9.5H27Z" fill="#b78d40" /><path d="M28.5 5.5H35.5L33.5 9.5H27Z" fill="#f2d17e" />
            <path d="M42 2 39 4.8 42 7.5V5.7Q45 5.5 46 8.5 46.5 4 42 3.8Z" fill="#5a9fd8" />
            <path d="M54.5 2 57.5 4.8 54.5 7.5V5.7Q52 5.5 51 8.5 50.5 4 54.5 3.8Z" fill="#777" />
          </svg>
        </QuickTools>
        <Text $color="#e8e8e8" $ls={0.05}>MultiFunctionDisplay.PrjPCB - Altium Designer (18.1.7)</Text>
        <TitleRight>
          <SearchBox>
            <svg width="6" height="6" viewBox="0 0 6 6"><circle cx="3" cy="2.6" r="2" fill="none" stroke="#ccc" strokeWidth=".9" /><path d="M4 4 5.7 5.7" stroke="#ccc" /></svg>
            <Text>Search</Text>
          </SearchBox>
          <WindowButton $w={20} $ml={4}><svg width="4" height="6"><path d="M0 5H4" stroke="#fff" strokeWidth="1.3" /></svg></WindowButton>
          <WindowButton $w={19}><svg width="7" height="6" viewBox="0 0 7 6"><path d="M2 2V.7H6.3V3H5M.6 2.5H4.8V5.2H.6Z" fill="none" stroke="#ddd" /></svg></WindowButton>
          <WindowButton $w={20} $close><svg width="5" height="5" viewBox="0 0 5 5"><path d="M.5.5 4.5 4.5M4.5.5.5 4.5" stroke="#fff" strokeWidth="1.3" /></svg></WindowButton>
        </TitleRight>
      </TitleBar>
      <MenuBar>
        {menus.map(([t, w]) => <MenuItem key={t} $w={w}>{t}</MenuItem>)}
        <MenuRight>
          <svg width="7" height="7" viewBox="0 0 7 7"><circle cx="3.5" cy="3.5" r="2.1" fill="none" stroke="#fff" strokeWidth="1.5" /><circle cx="3.5" cy="3.5" r="3.1" fill="none" stroke="#fff" strokeWidth=".8" strokeDasharray="1.2 1.2" /></svg>
          <svg width="7" height="7" viewBox="0 0 7 7"><path d="M3.5.5Q5.3 1 5.2 3.5L6 5H1L1.8 3.5Q1.7 1 3.5.5ZM2.8 5.5H4.2V6.5H2.8Z" fill="#eee" /></svg>
          <svg width="16" height="8" viewBox="0 0 16 8"><path d="M4.5.3Q7 .3 6.5 3L5.5 4.7V7.5H3.5V4.7L2.5 3Q2 .3 4.5.3Z" fill="#fff" /><path d="M12 3H15L13.5 4.7Z" fill="#ccc" /></svg>
        </MenuRight>
      </MenuBar>
      <Main>
        <Panel>
          <PanelHeader>
            <Text $weight={600} $ls={0.02}>PCB ActiveRoute</Text>
            <HeaderIcons>
              <svg width="5" height="5" viewBox="0 0 5 5"><path d="M.5 1.5H4.5L2.5 4Z" fill="#ddd" /></svg>
              <svg width="6" height="7" viewBox="0 0 6 7"><path d="M1.5.5H4.5V3.5H5.5V4.5H.5V3.5H1.5ZM2.6 4.5H3.4V7H2.6Z" fill="#eee" /></svg>
              <svg width="5" height="5" viewBox="0 0 5 5"><path d="M.7.7 4.3 4.3M4.3.7.7 4.3" stroke="#eee" strokeWidth="1.1" /></svg>
            </HeaderIcons>
          </PanelHeader>
          <PanelBody>
            <Sections>
              <Heading $h={16}><Tri />Action</Heading>
              <Card $h={43} $p="1px 3px 0 3px">
                <Row $h={13}><Check on /><Text>Tune Selected</Text><ActionButton $off><Text>ActiveRoute</Text><Text>Shift+A</Text></ActionButton></Row>
                <Row $h={13}><Check /><Text>Pin Swap Routing</Text></Row>
                <Row $h={13}><Check on /><Text>Gloss Results</Text><ActionButton><Text>Route Guide</Text></ActionButton></Row>
              </Card>
              <Heading $h={18} $pt={3}><Tri />Layers</Heading>
              <Card $h={80}>
                <Row $h={13} $pl={3}><Check mr={3} /><Text>Show Signal Layers Only</Text></Row>
                <Table>
                  <TableRow $head $h={11}>
                    <Check mr={3} /><ColRule $mr={14} /><ColRule $mr={3} /><Text $w={62}>Layer</Text><ColRule $mr={7} /><Text $w={9}>#</Text><ColRule $mr={3} /><Text>Type</Text>
                  </TableRow>
                  {layers.map(([n, i, t, c, on]) => (
                    <TableRow key={n} $on={i === "1"}>
                      <Check on={on} faint={!on} mr={0} /><Swatch $c={c} /><Text $w={67}>{n}</Text><Text $w={8} $align="center">{i}</Text><Text $pl={9}>{t}</Text>
                    </TableRow>
                  ))}
                </Table>
                <Row $h={10}><Text>If no layer checked, Active layer is used.</Text></Row>
              </Card>
              <Heading $h={17} $pt={3}><Tri />Control</Heading>
              <Card $h={73}>
                <Row $h={14}><Text $ls={0.03}>Track-Track Space In Route Guide</Text></Row>
                <Rule />
                <Row $h={23}><Field $w={46}><Text>Rule</Text></Field>
                  <Slider><Track $at={0}><Thumb /></Track><Ticks>{["Rule", ".100", ".125", ".150", ".175", ".200", ".225", ".250"].map((t) => <span key={t}>{t}</span>)}</Ticks></Slider>
                </Row>
                <Row $h={12}><Text>Meander % Over Manhattan Length</Text></Row>
                <Rule />
                <Row $h={23}><Field $w={46}><Text>100</Text></Field>
                  <Slider><Track $at={82}><Thumb /></Track><Ticks>{["0", "30", "50", "100", "150", "200"].map((t) => <span key={t}>{t}</span>)}</Ticks></Slider>
                </Row>
              </Card>
              <Heading $h={18} $pt={2}><Tri />Tune</Heading>
              <Card $h={210} $p="4px 3px 0">
                <Table>
                  <TableRow $head $h={10}><ColRule $ml={12} $mr={3} /><Text>Match Length Rules for Selected</Text></TableRow>
                  <TableRow $on><Check mr={8} /><Text>QSPI_MatchedLength</Text></TableRow>
                  <TableRow><Check on mr={8} /><Text>FMC_MatchedLength</Text></TableRow>
                </Table>
                <Row $h={32}><Text>Single Ended</Text></Row>
                <Rule $mt={-9} />
                <Row $h={6.6} />
                <Figure $h={65}><Meander /></Figure>
                <Row $h={7} />
                <Row $h={13}><Text $w={46} $align="right">Max Amplitude</Text><Field $w={140} $ml={8}><Text>1.000mm</Text></Field></Row>
                <Row $h={13}><Text $w={46} $align="right">Min Space</Text><Field $w={140} $ml={8}><Text>0.203mm</Text></Field></Row>
                <Row $h={11}><Text>Differential Pair</Text></Row>
                <Rule />
                <Row $h={8} />
                <Figure $h={24}><PairMeander /></Figure>
              </Card>
            </Sections>
            <ScrollTrack>
              <svg width="4" height="3"><path d="M0 3H4L2 .5Z" fill="#777" /></svg><ScrollThumb /><svg width="4" height="3"><path d="M0 0H4L2 2.5Z" fill="#888" /></svg>
            </ScrollTrack>
          </PanelBody>
          <PanelTabs>
            <Arrow><svg width="3" height="5"><path d="M3 0V5L0 2.5Z" fill="#eee" /></svg></Arrow>
            <Arrow><svg width="3" height="5"><path d="M0 0V5L3 2.5Z" fill="#eee" /></svg></Arrow>
            {panelTabs.map(([t, w, on]) => <PanelTab key={t} $w={w} $on={on}>{t}</PanelTab>)}
          </PanelTabs>
        </Panel>
        <Workspace>
          <DocTabs>
            <DocTab>
              <svg width="8" height="7" viewBox="0 0 8 7"><rect width="8" height="7" rx=".7" fill="#149c6a" /><path d="M1.5 1.5H3V5H1.5M4 2H6.5V5H4" fill="none" stroke="#d6f2e6" strokeWidth=".8" /></svg>
              <Text>MultiFunctionDisplay.PcbDoc *</Text>
            </DocTab>
          </DocTabs>
          <Canvas>
            <Board />
            <FloatBar>
              {toolIcons.map((ic, i) => (
                <ToolCell key={i}><svg width="15" height="14" viewBox="-2.5 -2 15 14"><g transform="translate(.5 .5) scale(.9)">{ic}</g>{i > 0 && <path d="M12 9.7V12H9.7Z" fill="#eee" />}</svg></ToolCell>
              ))}
            </FloatBar>
          </Canvas>
          <LayerTabs>
            <CurrentLayer>LS</CurrentLayer>
            {layerTabs.map(([t, w, c, on]) => <LayerTab key={t} $w={w} $on={on}><LayerColor $c={c} /><Text $weight="inherit">{t}</Text></LayerTab>)}
          </LayerTabs>
        </Workspace>
        <SideBar><SideTab>Projects - Properties</SideTab></SideBar>
      </Main>
      <Status>
        <StatusRow>
          <Text $w={63}>X:155.4mm Y:20.1mm</Text><Text $w={43}>Grid: 0.1mm</Text><Text $w={42}>(Hotspot Snap)</Text>
          <Divider $ml={108} /><Divider $ml={258} /><PanelsButton>Panels</PanelsButton>
        </StatusRow>
        <StatusRow><Text>Idle state - ready for command</Text></StatusRow>
      </Status>
      <TaskBar>
        {tasks.map(([ic, run], i) => <TaskButton key={i} $run={run}><svg width="13" height="13" viewBox="-1.5 -1.5 13 13">{ic}</svg></TaskButton>)}
        <TaskButton $run $on><AltiumMark s={13} /></TaskButton>
        <Tray>
          <svg width="74" height="14" viewBox="0 0 74 14">
            <path d="M0 9 3 6 6 9" fill="none" stroke="#ddd" />
            <path d="M13 10Q11.5 9 13.5 7.5 14.5 4.500 17 6 19.5 5 19.5 7.5 21.5 8.5 20 10Z" fill="#1683d8" />
            <path d="M27 4.500H33.500V9H27ZM26 3V7M29 11H32" fill="none" stroke="#e8e8e8" />
            <path d="M38 6H39.500L41.500 4V10L39.500 8.500H38ZM43 5.500Q44.300 7 43 9M44.700 4.500Q46.500 7 44.700 10" fill="none" stroke="#ddd" strokeWidth=".8" />
            <text x="51" y="10.300" fontSize="9" fontFamily="Open Sans" fill="#eee">A</text>
            <rect x="66" y="3.500" width="7" height="7" fill="#eee" /><path d="M68 9V5H71M71.500 5V9H69" fill="none" stroke="#222" strokeWidth=".8" strokeDasharray="2 1" />
          </svg>
          <Clock>15:00<br />2018/07/10</Clock>
          <svg width="15" height="15" viewBox="0 0 15 15"><path d="M1 2H9V9H5L3.500 11V9H1Z" fill="#f1f1f1" /><path d="M2.500 4H7.500M2.500 6H7.500" stroke="#333" strokeWidth=".7" /><circle cx="9.500" cy="10" r="4.400" fill="#333" stroke="#aaa" strokeWidth=".5" /><text x="9.500" y="12" textAnchor="middle" fontSize="5.500" fontFamily="Open Sans" fill="#fff">21</text></svg>
        </Tray>
      </TaskBar>
    </Window>
  );
}
